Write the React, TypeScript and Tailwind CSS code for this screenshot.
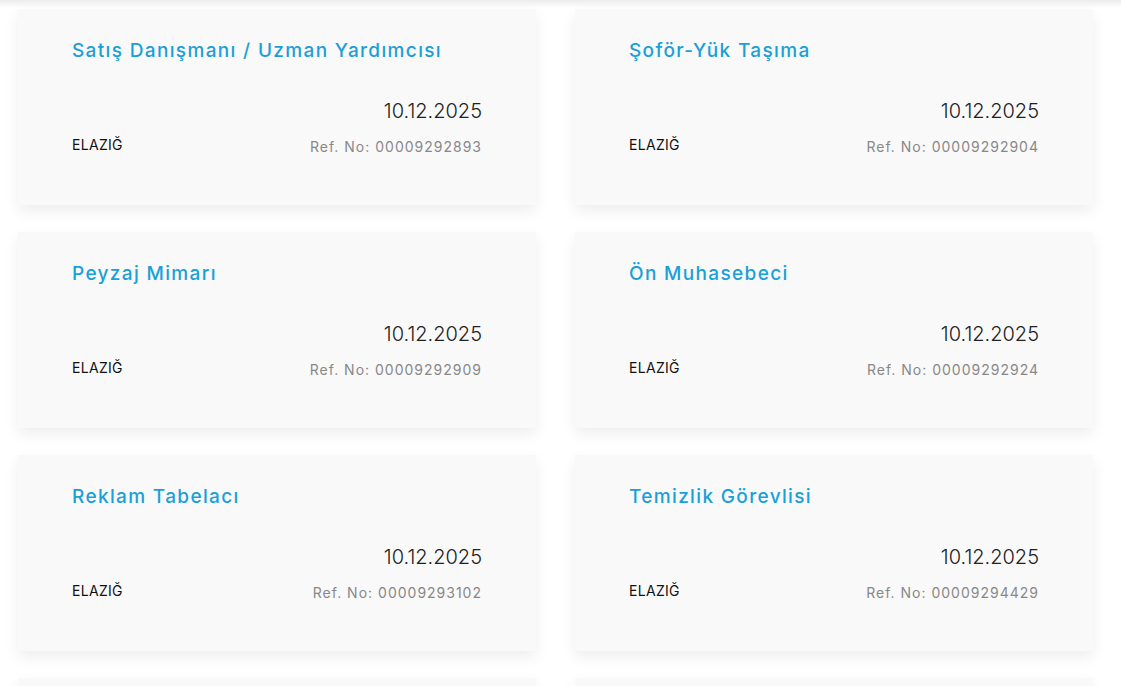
const jobs = [
  { title: "Satış Danışmanı / Uzman Yardımcısı", ref: "00009292893" },
  { title: "Şoför-Yük Taşıma", ref: "00009292904" },
  { title: "Peyzaj Mimarı", ref: "00009292909" },
  { title: "Ön Muhasebeci", ref: "00009292924" },
  { title: "Reklam Tabelacı", ref: "00009293102" },
  { title: "Temizlik Görevlisi", ref: "00009294429" },
  { title: "Garson", ref: "00009294431" },
  { title: "Depo Elemanı", ref: "00009294450" },
];

function JobCard({ title, refNo }: { title: string; refNo: string }) {
  return (
    <article className="h-[196px] bg-[#f9f9f9] px-[54px] pt-[28px] shadow-[0_6px_14px_rgba(0,0,0,0.07)]">
      <h3 className="text-[19px] leading-[27px] font-medium tracking-[1.35px] text-[#1aa0d8]">{title}</h3>
      <div className="mt-[32px] flex items-end justify-between">
        <span className="mb-[2px] text-[14px] leading-[21px] tracking-[0.3px] text-[#111]">ELAZIĞ</span>
        <div className="text-right">
          <div className="text-[20px] leading-[30px] font-light text-[#222]">10.12.2025</div>
          <div className="mt-[10px] text-[14px] leading-[21px] tracking-[1px] text-[#888]">Ref. No: {refNo}</div>
        </div>
      </div>
    </article>
  );
}

export default function App() {
  return (
    <div className="min-h-screen bg-white bg-[linear-gradient(to_bottom,#ececec_0px,#ffffff_8px)] pt-[9px] pl-[18px] font-['Inter',sans-serif]">
      <div className="grid w-[1075px] grid-cols-2 gap-x-[39px] gap-y-[27px]">
        {jobs.map((job) => (
          <JobCard key={job.ref} title={job.title} refNo={job.ref} />
        ))}
      </div>
    </div>
  );
}
